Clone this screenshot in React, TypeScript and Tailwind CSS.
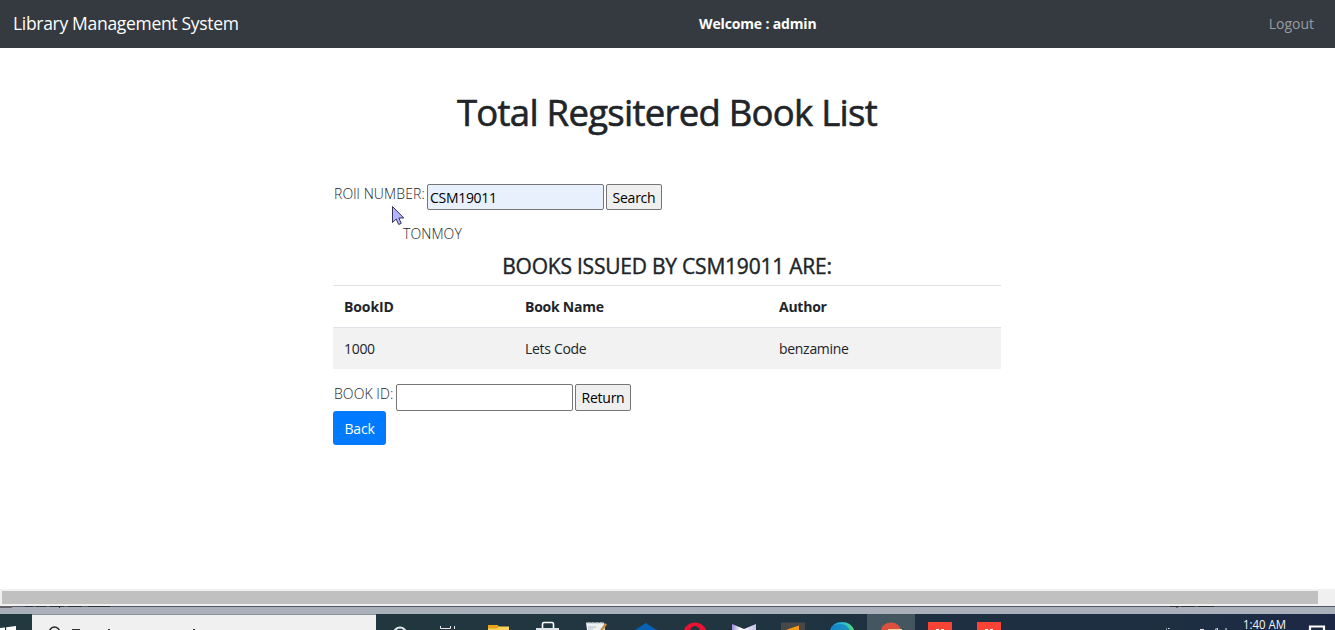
import React from 'react';

function Taskbar() {
  return (
    <svg className="block h-[16px] w-full" viewBox="0 614 1335 16">
      <defs>
        <linearGradient id="bar" x1="0" x2="1" y1="0" y2="0">
          <stop offset="0" stopColor="#223940" />
          <stop offset="0.5" stopColor="#213640" />
          <stop offset="0.72" stopColor="#1d2f40" />
          <stop offset="0.88" stopColor="#1e2f42" />
          <stop offset="1" stopColor="#1c2745" />
        </linearGradient>
        <linearGradient id="edge" x1="0" x2="1" y1="0" y2="0">
          <stop offset="0" stopColor="#168bd2" />
          <stop offset="0.5" stopColor="#28b9df" />
          <stop offset="1" stopColor="#55d878" />
        </linearGradient>
        <linearGradient id="vs" x1="0" x2="1" y1="0" y2="0">
          <stop offset="0" stopColor="#9b8bd6" />
          <stop offset="0.35" stopColor="#ffffff" />
          <stop offset="1" stopColor="#c9bfe8" />
        </linearGradient>
      </defs>
      <rect y="614" width="1335" height="16" fill="url(#bar)" />
      <path d="M0 628l5-.6V630H0zM6.200 627.300L16 626v4H6.200z" fill="#fff" />
      <rect x="32" y="614.500" width="344" height="15.500" fill="#f0f0f0" />
      <circle cx="54.500" cy="632" r="5" fill="none" stroke="#222" strokeWidth="1.500" />
      <path d="M72 629.500h8M108 629.500h2M193 629.500h2" stroke="#333" />
      <circle cx="400" cy="633.500" r="6" fill="none" stroke="#e4e9eb" strokeWidth="2" />
      <path d="M440.500 626v2.500h10V626M454.500 626v3" fill="none" stroke="#e4e9eb" />
      <path d="M488 625h9l2 1.500h10V630h-21z" fill="#ffd35c" />
      <path d="M488 625h9l2 1.500-1.500 2H488z" fill="#e8a318" />
      <path d="M542.500 630v-6q0-1.500 1.500-1.500h8q1.500 0 1.500 1.500v6" fill="none" stroke="#fff" strokeWidth="1.600" />
      <path d="M536 628h23v2h-23z" fill="#dfe5e7" />
      <path d="M586 623h18l1 7h-18z" fill="#eef1f1" />
      <path d="M586 623h18M589 622v2M593 622v2M597 622v2M601 622v2" stroke="#c5cdd0" />
      <path d="M588 627h8M588 629h5" stroke="#9eabb0" strokeWidth=".7" />
      <path d="M600 630l5-7 2 1.500-4 5.500z" fill="#c8923e" />
      <path d="M635 630l11-7 11 7z" fill="#0961b4" />
      <path d="M684 630q3-7.500 11-7.500t11 7.500h-6q-2-4-5-4t-5 4z" fill="#e91331" />
      <path d="M732 624l12 5 12-5v6h-24z" fill="url(#vs)" />
      <path d="M781 622.500h24v7.500h-24z" fill="#484848" />
      <path d="M787 629.500l12-4v4.500h-12z" fill="#f99b13" />
      <path d="M830 630q3-8 12-8t12 8z" fill="url(#edge)" />
      <path d="M830 630q3-6 10-6t10 6z" fill="#167dbf" opacity=".7" />
      <rect x="867" y="614" width="48" height="16" fill="#445761" />
      <path d="M881 630q2-7.500 10-7.500t10 7.500z" fill="#dd503f" />
      <path d="M888 629h14v1h-14z" fill="#f6d5a0" />
      <path d="M928 622h24v8h-24zM977 622h24v8h-24z" fill="#f94335" />
      <path d="M936 629.500h3M941 629.500h3M985 629.500h3M990 629.500h3" stroke="#fff" />
      <path d="M1166 629h1M1168 628.500h1.500M1200 629.500h4M1215 629.500l2.500-1v1.500M1225 629h2" stroke="#e4e8ee" fill="none" />
      <path d="M1310 630v-3.500h14v3.500" fill="none" stroke="#fff" strokeWidth="2.200" />
      <text x="1243" y="628.500" fontSize="12" fill="#f4f6fa" fontFamily="Open Sans, sans-serif" textLength="43" lengthAdjust="spacingAndGlyphs">1:40 AM</text>
    </svg>
  );
}

function Navbar() {
  return (
    <nav className="flex h-[48px] items-center bg-[#343a40] pb-[2px] text-white">
      <div className="w-[686px] whitespace-nowrap pl-[13px] text-[17.500px] leading-[24px] tracking-[-0.310px]">Library Management System</div>
      <div className="ml-[13px] flex-1 whitespace-nowrap text-[14px] font-bold tracking-[-0.150px]">Welcome : admin</div>
      <a className="mr-[21px] text-[14px] text-[#999c9f]">Logout</a>
    </nav>
  );
}

function Field({ label, value, action, filled }: { label: string; value: string; action: string; filled?: boolean }) {
  return (
    <div className="flex h-[27px] items-start">
      <span className={`whitespace-nowrap pl-px font-light leading-[20px] ${filled ? 'w-[94px] tracking-[0.130px]' : 'w-[63px] tracking-[0.080px]'}`}>{label}</span>
      <input readOnly value={value} className={`w-[177px] rounded-[2px] border border-[#767676] px-[2px] py-0 tracking-[-0.300px] text-black ${filled ? 'h-[26px] bg-[#e8f0fe]' : 'h-[27px] bg-white'}`} />
      <button className={`ml-[2px] w-[56px] rounded-[2px] border border-[#767676] bg-[#efefef] text-center tracking-[-0.250px] text-black ${filled ? 'h-[26px]' : 'h-[27px]'}`}>{action}</button>
    </div>
  );
}

export default function App() {
  return (
    <div className="flex h-[630px] w-[1335px] flex-col overflow-hidden bg-white font-['Open_Sans',sans-serif] text-[14px] text-[#212529]">
      <Navbar />
      <main className="ml-[333px] h-[541px] w-[668px] pt-[40px]">
        <h1 className="whitespace-nowrap text-center text-[36.500px] leading-[48px] tracking-[-0.730px] [-webkit-text-stroke:0.6px_#212529]">Total Regsitered Book List</h1>
        <div className="pt-[48px]">
          <Field label="ROll NUMBER:" value="CSM19011" action="Search" filled />
        </div>
        <p className="h-[42px] pl-[70px] pt-[13px] font-light leading-[20px] tracking-[0.100px]">TONMOY</p>
        <h4 className="h-[32px] whitespace-nowrap text-center text-[21px] leading-[26px] tracking-[-0.220px] [-webkit-text-stroke:0.4px_#212529]">BOOKS ISSUED BY CSM19011 ARE:</h4>
        <table className="h-[84px] w-full table-fixed border-separate border-spacing-0 text-left">
          <colgroup>
            <col className="w-[181px]" />
            <col className="w-[254px]" />
            <col />
          </colgroup>
          <thead>
            <tr className="h-[42px] font-bold tracking-[-0.100px]">
              <th className="border-t border-[#dee2e6] py-0 pl-[11px]">BookID</th>
              <th className="border-t border-[#dee2e6] py-0 pl-[11px] tracking-[-0.250px]">Book Name</th>
              <th className="border-t border-[#dee2e6] py-0 pl-[11px] tracking-[-0.250px]">Author</th>
            </tr>
          </thead>
          <tbody>
            <tr className="h-[42px] bg-[#f2f2f2] tracking-[-0.300px]">
              <td className="border-t border-[#dee2e6] py-0 pl-[11px]">1000</td>
              <td className="border-t border-[#dee2e6] py-0 pl-[11px]">Lets Code</td>
              <td className="border-t border-[#dee2e6] py-0 pl-[11px]">benzamine</td>
            </tr>
          </tbody>
        </table>
        <div className="pt-[15px]">
          <Field label="BOOK ID:" value="" action="Return" />
        </div>
        <button className="block h-[34px] w-[53px] rounded-[3px] bg-[#007bff] pt-px tracking-[-0.200px] text-white">Back</button>
      </main>
      <div className="h-[17px] bg-[#f0f0f0] pl-[2px] pt-[2px]">
        <div className="h-[13px] w-[1316px] bg-[#c0c0c0]" />
      </div>
      <div className="h-[8px] border-t border-[#56555f] bg-[#a9b0ba]">
        <svg className="-mt-px block h-[3px] w-full" viewBox="0 0 1335 3">
          <path d="M0 0h12v2H0z" fill="#65636a" />
          <path d="M25 .5h8M36 .5h10M50 .5h14M68 .5h14M88 .5h22M59.500 0v2M1170 .5h9M1181 .5h14M1198 .5h16M1177 0v2" stroke="#33313a" fill="none" />
        </svg>
      </div>
      <Taskbar />
      <svg className="absolute left-[391px] top-[205px] h-[21px] w-[14px]" viewBox="0 0 14 21">
        <path d="M1.500 1.500v16l3.700-3.500 2.500 5.500 2.600-1.200-2.500-5.300h5z" fill="#b4b4ff" stroke="#35355f" />
      </svg>
    </div>
  );
}
